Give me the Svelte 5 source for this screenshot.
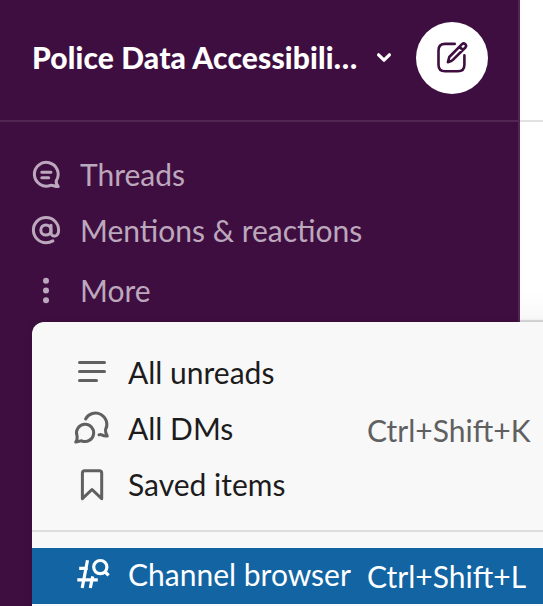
<script>
  const nav = [
    { icon: 'threads', label: 'Threads' },
    { icon: 'mention', label: 'Mentions & reactions' },
    { icon: 'more', label: 'More' },
  ];
  const items = [
    { icon: 'unreads', label: 'All unreads' },
    { icon: 'dms', label: 'All DMs', keys: 'Ctrl+Shift+K' },
    { icon: 'saved', label: 'Saved items' },
  ];
</script>

{#snippet glyph(name)}
  <svg class="glyph" width="40" height="40" viewBox="0 0 40 40" fill="none" stroke="currentColor" stroke-width="3" stroke-linecap="round" stroke-linejoin="round">
    {#if name === 'threads'}
      <path d="M30.3 24.6A11.9 11.9 0 1 0 24.6 29.3C26.5 28.6 28.5 30.7 32.2 30.6C30.6 28.8 29.8 27 30.3 24.6Z" />
      <path d="M15.8 16.3H24.9M15.8 21.7H22.7" />
    {:else if name === 'mention'}
      <circle cx="19.9" cy="18" r="5.1" />
      <path d="M25 13.2V20.6C25 25.7 32.6 25.4 32.6 18.2A12.6 12.6 0 1 0 20 30.7C23 30.7 25 30 26.9 28.9" />
    {:else if name === 'more'}
      <g fill="currentColor" stroke="none"><circle cx="20" cy="8.7" r="3" /><circle cx="20" cy="18.5" r="3" /><circle cx="20" cy="28.3" r="3" /></g>
    {:else if name === 'unreads'}
      <path d="M7.5 8.5H32.5M7.5 17.5H32.5M7.5 26.5H24.5" />
    {:else if name === 'dms'}
      <path d="M13.6 9A11.3 11.3 0 1 1 33.5 19.8C33.1 22.6 34.3 24.5 35.3 26C32.5 26.4 31.3 25.8 29.8 24.9Q28.3 24.2 27 24.8" />
      <path d="M5 25.8A8.6 8.6 0 1 1 9.7 30.8C7.5 30.7 6 32.2 3.7 32.1C5.2 30.3 5.4 28.3 5 25.8Z" />
    {:else if name === 'saved'}
      <path d="M10.4 32.7V7.1Q10.4 4.7 12.8 4.7H27.3Q29.7 4.7 29.7 7.1V32.7L20 23.5Z" />
    {:else if name === 'channels'}
      <g stroke-width="3.2" stroke-linecap="butt">
        <path d="M15.5 4.2L10.2 32M20.7 20.4L18.3 32M7.2 12.4H15.8M5.3 23.8H25.8" />
        <circle cx="28.3" cy="11.1" r="6.6" />
        <path d="M32.7 15.5L36.6 19.4" />
      </g>
    {/if}
  </svg>
{/snippet}

<div class="screen">
  <aside>
    <header>
      <h1>Police Data Accessibili…</h1>
      <svg class="chevron" width="18" height="14" viewBox="0 0 18 14" fill="none" stroke="#fff" stroke-width="3.2" stroke-linecap="round" stroke-linejoin="round"><path d="M3.6 4.8L9 10.2L14.4 4.8" /></svg>
      <button class="compose" aria-label="New message">
        <svg width="40" height="40" viewBox="0 0 40 40" fill="none" stroke="#3f0e40" stroke-width="2.6" stroke-linecap="round" stroke-linejoin="round">
          <path d="M22.7 5.9H13Q6.5 5.9 6.5 12.4V26.8Q6.5 33.3 13 33.3H25.9Q32.4 33.3 32.4 26.8V17.4" />
          <path d="M15.9 24.2L17.3 19L30 6.2Q31.6 4.7 33.3 6.2Q35 7.9 33.4 9.5L20.6 22.1Q19.7 23 15.9 24.2Z M27.5 8.7L30.9 12" />
        </svg>
      </button>
    </header>
    <nav>
      {#each nav as entry}
        <div class="link {entry.icon}">{@render glyph(entry.icon)}<span>{entry.label}</span></div>
      {/each}
    </nav>
  </aside>
  <main><div class="topbar"></div><div class="pane"></div></main>

  <div class="menu">
    {#each items as item}
      <div class="item">
        {@render glyph(item.icon)}<span class="label">{item.label}</span>
        {#if item.keys}<kbd>{item.keys}</kbd>{/if}
      </div>
    {/each}
    <hr />
    <div class="item active">
      {@render glyph('channels')}<span class="label">Channel browser</span><kbd>Ctrl+Shift+L</kbd>
    </div>
  </div>
</div>

<style>
  :global(body) { margin: 0; overflow: hidden; }
  .screen {
    position: relative;
    display: flex;
    width: 543px;
    height: 606px;
    overflow: hidden;
    background: #fff;
    font: 400 30px/56px Lato, sans-serif;
  }
  aside {
    box-sizing: border-box;
    flex: 0 0 520px;
    background: #3f0e40;
    border-right: 2px solid #522653;
    color: #bca8bd;
  }
  header {
    display: flex;
    align-items: center;
    box-sizing: border-box;
    height: 122px;
    margin-right: -2px;
    padding: 0 32px 6px;
    border-bottom: 2px solid #522653;
  }
  h1 {
    flex: 0 0 343px;
    margin: 0;
    color: #fff;
    font-size: 30px;
    font-weight: 900;
    letter-spacing: 0.13px;
    white-space: nowrap;
  }
  .chevron { flex: none; margin-right: 23px; }
  .compose {
    display: grid;
    flex: none;
    place-items: center;
    width: 72px;
    height: 72px;
    margin-top: 2px;
    padding: 0;
    border: 0;
    border-radius: 50%;
    background: #fff;
  }
  nav { padding: 26px 0 0 26px; }
  .link, .item { display: flex; align-items: center; height: 56px; white-space: nowrap; }
  .link span { margin-left: 14px; padding-bottom: 4px; }
  .link.more { margin-top: 4px; }
  .glyph { flex: none; }
  main { flex: 1; }
  .topbar { height: 120px; border-bottom: 2px solid #e2e2e2; }
  .pane { height: 198px; border-bottom: 2px solid #dcdcdc; background: linear-gradient(#fff 170px, #f8f8f8); }
  .menu {
    position: absolute;
    top: 322px;
    left: 32px;
    box-sizing: border-box;
    width: 540px;
    height: 310px;
    padding-top: 24px;
    border-radius: 12px;
    background: #f8f8f8;
    color: #1d1c1d;
    box-shadow: 0 0 6px rgba(0, 0, 0, 0.12);
  }
  .item { padding-left: 40px; }
  .item .glyph { color: #616061; }
  .label { width: 239px; margin-left: 16px; padding-bottom: 4px; }
  kbd { color: #616061; font: inherit; }
  hr { height: 2px; margin: 16px 0; border: 0; background: #dddddd; }
  .active { background: #1264a3; color: #fff; }
  .active .glyph, .active kbd { color: #fff; }
</style>
